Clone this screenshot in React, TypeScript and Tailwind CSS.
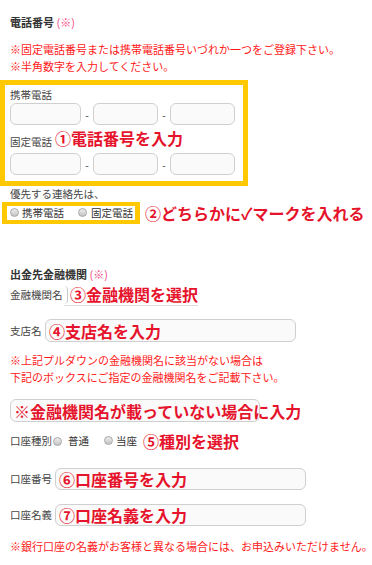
const jp = "font-['Meiryo','Noto_Sans_CJK_JP',sans-serif]";

function Box({ w, h = 'h-[22px]', children }: { w: string; h?: string; children?: React.ReactNode }) {
  return (
    <div className={`${w} ${h} shrink-0 rounded-[6px] border border-[#cfcfcf] bg-[#fafafa] flex items-center pl-[3px] whitespace-nowrap`}>
      {children}
    </div>
  )
}

function Note({ children }: { children: React.ReactNode }) {
  return <span className="text-[16px] leading-[20px] font-bold text-[#e5132b] whitespace-nowrap">{children}</span>
}

function Radio() {
  return <span className="inline-block w-[9px] h-[9px] rounded-full border border-[#a8a8a8] bg-gradient-to-b from-[#eeeeee] to-[#c4c4c4] shrink-0" />
}

function PhoneRow() {
  return (
    <div className="flex items-center">
      <Box w="w-[71px]" />
      <span className="w-[12px] text-center text-[10px] text-[#333]">-</span>
      <Box w="w-[65px]" />
      <span className="w-[12px] text-center text-[10px] text-[#333]">-</span>
      <Box w="w-[65px]" />
    </div>
  )
}

export default function App() {
  return (
    <div className={`w-[372px] h-[565px] bg-white overflow-hidden text-[#333] ${jp}`}>
      <div className="pl-[10px] pt-[14px]">
        <div className="text-[11px] leading-4 font-bold">
          電話番号 <span className="font-normal text-[#f0457f]">(※)</span>
        </div>
        <div className="mt-[11px] text-[11px] leading-[17px] text-[#ff1a1a]">
          <div>※固定電話番号または携帯電話番号いづれか一つをご登録下さい。</div>
          <div>※半角数字を入力してください。</div>
        </div>
      </div>

      <div className="relative mt-[5px] w-[248px] border-[5px] border-[#ffc800] pl-[5px] pt-[2px] pb-[6px]">
        <div className="text-[10.5px] leading-4 text-[#444]">携帯電話</div>
        <PhoneRow />
        <div className="mt-[9px] text-[10.5px] leading-4 text-[#444]">固定電話</div>
        <div className="mt-[3px]">
          <PhoneRow />
        </div>
        <div className="absolute left-[50px] top-[41px]">
          <Note>①電話番号を入力</Note>
        </div>
      </div>

      <div className="pl-[10px] mt-[1px] text-[10.5px] leading-[14px] text-[#444]">優先する連絡先は、</div>
      <div className="flex items-center">
        <div className="ml-[2px] w-[138px] h-[22px] border-x-[5px] border-y-[4px] border-[#ffc800] flex items-center text-[10.5px] text-[#333] bg-white">
          <span className="ml-[3px]"><Radio /></span>
          <span className="ml-[3px]">携帯電話</span>
          <span className="ml-[14px]"><Radio /></span>
          <span className="ml-[4px]">固定電話</span>
        </div>
        <div className="ml-[5px]">
          <Note>②どちらかに✓マークを入れる</Note>
        </div>
      </div>

      <div className="pl-[10px]">
        <div className="mt-[41px] text-[11px] leading-4 font-bold">
          出金先金融機関 <span className="font-normal text-[#f0457f]">(※)</span>
        </div>

        <div className="mt-[2px] h-[22px] flex items-center text-[10.5px] text-[#444]">
          <span className="w-[54px]">金融機関名</span>
          <div className="relative w-[134px] h-[22px] border-b border-[#dcdcdc]">
            <span className="absolute left-0 top-[2px] w-[4px] h-[18px] border-r border-[#c8c8c8] rounded-r-[6px]" />
            <div className="absolute left-[6px] top-0">
              <Note>③金融機関を選択</Note>
            </div>
          </div>
        </div>

        <div className="mt-[13px] flex items-center text-[10.5px] text-[#444]">
          <span className="w-[35px]">支店名</span>
          <Box w="w-[251px]" h="h-[23px]">
            <Note>④支店名を入力</Note>
          </Box>
        </div>

        <div className="mt-[10px] text-[11px] leading-[17px] text-[#ff1a1a]">
          <div>※上記プルダウンの金融機関名に該当がない場合は</div>
          <div>下記のボックスにご指定の金融機関名をご記載下さい。</div>
        </div>

        <div className="mt-[13px]">
          <Box w="w-[250px]" h="h-[23px]">
            <Note>※金融機関名が載っていない場合に入力</Note>
          </Box>
        </div>

        <div className="mt-[9px] h-[20px] flex items-center text-[10.5px] text-[#333]">
          <span className="w-[43px] text-[#444]">口座種別</span>
          <Radio />
          <span className="ml-[6px]">普通</span>
          <span className="ml-[15px]"><Radio /></span>
          <span className="ml-[3px]">当座</span>
          <span className="ml-[6px]"><Note>⑤種別を選択</Note></span>
        </div>

        <div className="mt-[17px] flex items-center text-[10.5px] text-[#444]">
          <span className="w-[45px]">口座番号</span>
          <Box w="w-[251px]">
            <Note>⑥口座番号を入力</Note>
          </Box>
        </div>

        <div className="mt-[14px] flex items-center text-[10.5px] text-[#444]">
          <span className="w-[45px]">口座名義</span>
          <Box w="w-[251px]">
            <Note>⑦口座名義を入力</Note>
          </Box>
        </div>

        <div className="mt-[12px] text-[11px] leading-[17px] text-[#ff1a1a] whitespace-nowrap">
          ※銀行口座の名義がお客様と異なる場合には、お申込みいただけません。
        </div>
      </div>
    </div>
  )
}
